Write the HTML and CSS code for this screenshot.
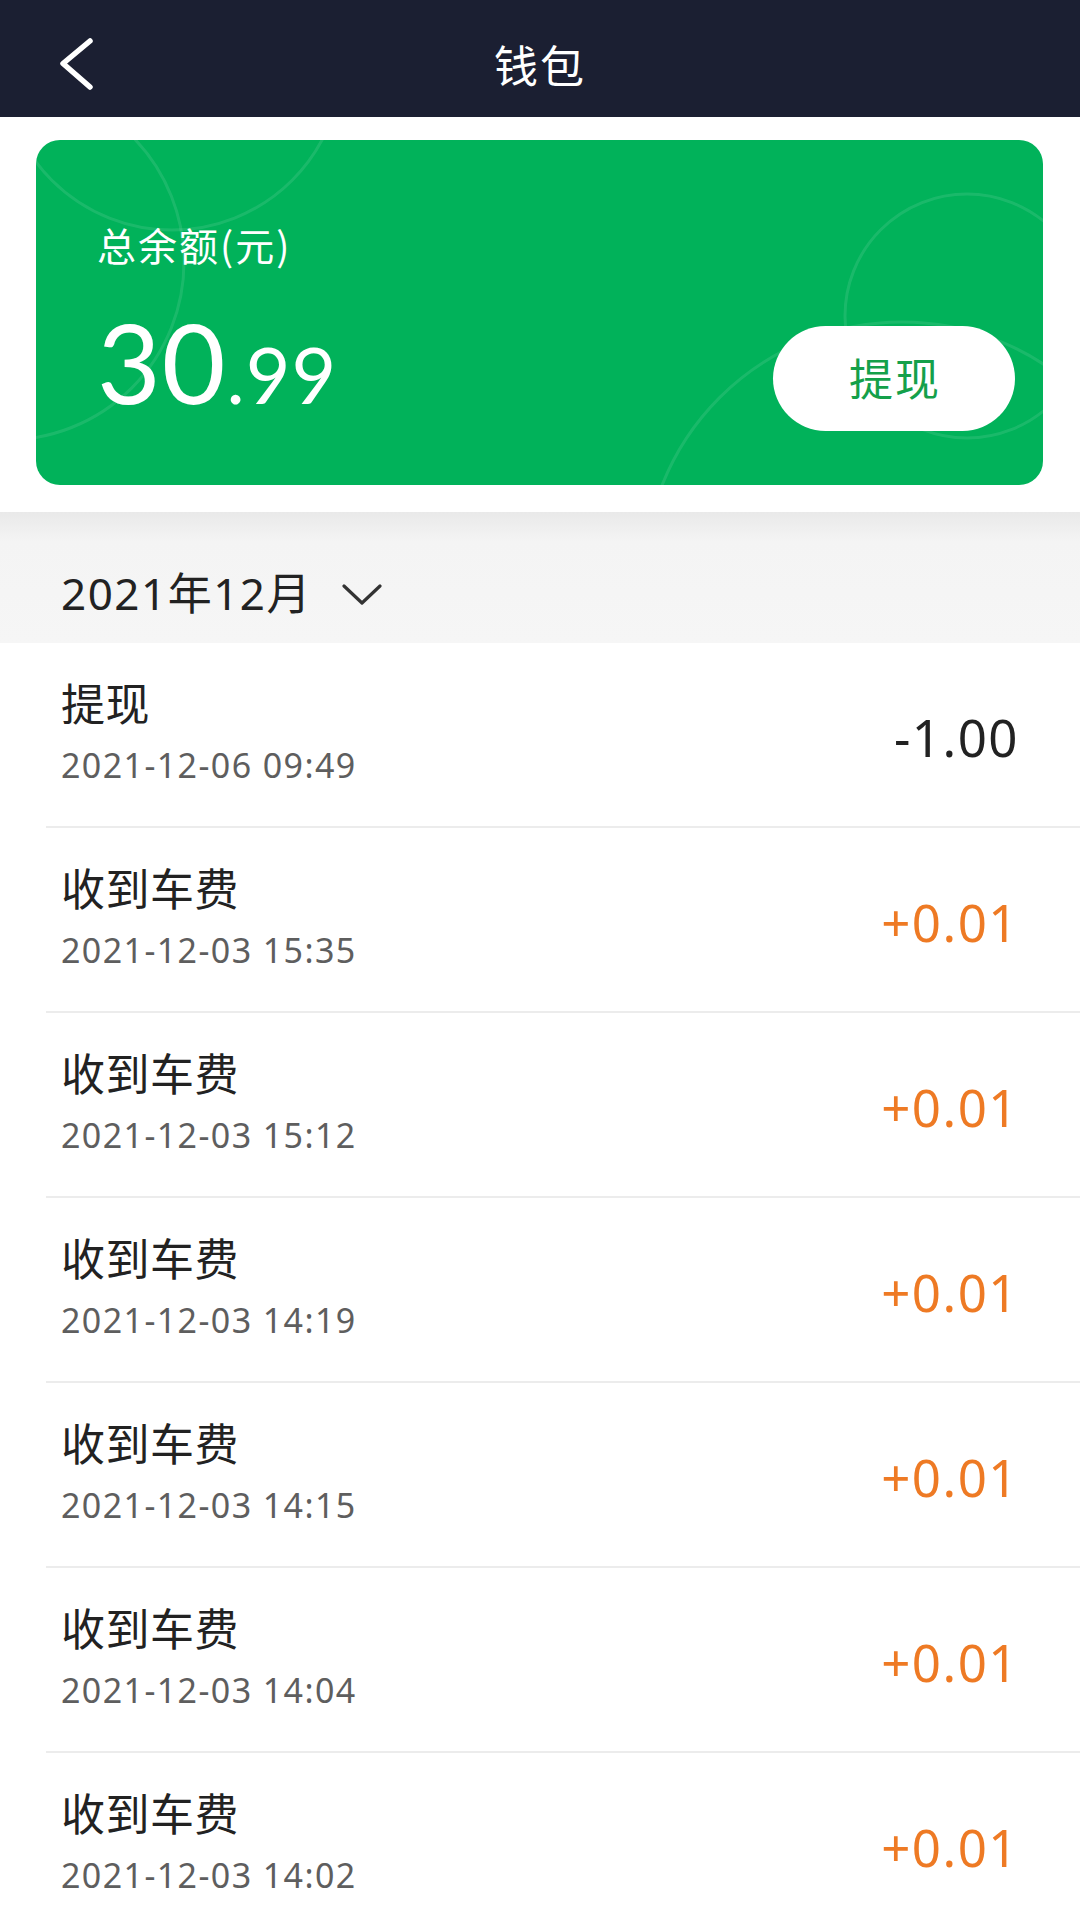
FILE: index.html
```html
<!DOCTYPE html>
<html lang="zh-CN">
<head>
<meta charset="utf-8">
<title>钱包</title>
<link rel="stylesheet" href="styles.css">
</head>
<body>
<div class="app">
  <header class="topbar">
    <div class="back">
      <svg width="44" height="60" viewBox="0 0 44 60"><polyline points="34,7 7,29.5 34,53" fill="none" stroke="#ffffff" stroke-width="5.5" stroke-linecap="round" stroke-linejoin="round"/></svg>
    </div>
    <h1 class="title">钱包</h1>
    <div></div>
  </header>

  <section class="card">
    <svg class="card-deco" width="1007" height="345" viewBox="0 0 1007 345">
      <g fill="none" stroke="rgba(255,255,255,0.1)" stroke-width="3">
        <circle cx="-30" cy="122" r="178"/>
        <circle cx="136" cy="-80" r="170"/>
        <circle cx="931" cy="176" r="122"/>
        <circle cx="866" cy="440" r="258"/>
      </g>
    </svg>
    <div class="card-label">总余额(元)</div>
    <div class="card-row">
      <div class="balance"><span class="int">30</span><span class="dec">.99</span></div>
      <button class="withdraw">提现</button>
    </div>
  </section>

  <div class="gap"></div>

  <div class="month">
    <span class="month-text">2021年12月</span>
    <svg class="month-arrow" width="40" height="24" viewBox="0 0 40 24"><polyline points="2,3 20,20 38,3" fill="none" stroke="#333" stroke-width="3.2" stroke-linecap="round" stroke-linejoin="round"/></svg>
  </div>

  <ul class="list">
    <li class="row">
      <div class="info"><div class="name">提现</div><div class="time">2021-12-06 09:49</div></div>
      <div class="amt minus">-1.00</div>
    </li>
    <li class="row">
      <div class="info"><div class="name">收到车费</div><div class="time">2021-12-03 15:35</div></div>
      <div class="amt plus">+0.01</div>
    </li>
    <li class="row">
      <div class="info"><div class="name">收到车费</div><div class="time">2021-12-03 15:12</div></div>
      <div class="amt plus">+0.01</div>
    </li>
    <li class="row">
      <div class="info"><div class="name">收到车费</div><div class="time">2021-12-03 14:19</div></div>
      <div class="amt plus">+0.01</div>
    </li>
    <li class="row">
      <div class="info"><div class="name">收到车费</div><div class="time">2021-12-03 14:15</div></div>
      <div class="amt plus">+0.01</div>
    </li>
    <li class="row">
      <div class="info"><div class="name">收到车费</div><div class="time">2021-12-03 14:04</div></div>
      <div class="amt plus">+0.01</div>
    </li>
    <li class="row">
      <div class="info"><div class="name">收到车费</div><div class="time">2021-12-03 14:02</div></div>
      <div class="amt plus">+0.01</div>
    </li>
  </ul>
</div>
</body>
</html>
```

FILE: styles.css
```css
* { box-sizing: border-box; }
html, body {
  margin: 0;
  padding: 0;
  background: #ffffff;
}
body {
  font-family: "Noto Sans", "Noto Sans CJK SC", sans-serif;
  color: #222222;
}
.app {
  width: 1080px;
  height: 1920px;
  overflow: hidden;
  background: #ffffff;
}

/* top bar */
.topbar {
  height: 117px;
  background: #1b1f32;
  display: grid;
  grid-template-columns: 1fr auto 1fr;
  align-items: center;
}
.back {
  padding-left: 56px;
  padding-top: 10px;
  display: flex;
  align-items: center;
}
.title {
  margin: 0;
  padding-top: 10px;
  font-size: 44px;
  font-weight: 400;
  line-height: 1;
  letter-spacing: 2px;
  color: #ffffff;
  font-family: "Noto Sans CJK SC", sans-serif;
}

/* balance card */
.card {
  position: relative;
  overflow: hidden;
  margin: 23px 37px 0 36px;
  height: 345px;
  border-radius: 24px;
  background: #01b25a;
  padding: 85px 28px 0 61px;
  color: #ffffff;
}
.card-deco {
  position: absolute;
  left: 0;
  top: 0;
  pointer-events: none;
}
.card-label {
  position: relative;
  font-family: "Noto Sans CJK SC", sans-serif;
  font-size: 39px;
  line-height: 1;
  letter-spacing: 2px;
}
.card-row {
  position: relative;
  display: flex;
  justify-content: space-between;
  align-items: flex-start;
  margin-top: 42px;
}
.balance {
  font-family: "Lato", sans-serif;
  line-height: 1;
  white-space: nowrap;
  letter-spacing: 1px;
}
.balance .int {
  font-size: 110px;
  font-weight: 400;
}
.balance .dec {
  font-size: 77px;
  font-weight: 400;
}
.withdraw {
  margin-top: 20px;
  width: 242px;
  height: 105px;
  border: none;
  border-radius: 53px;
  background: #ffffff;
  color: #14a04a;
  font-family: "Noto Sans CJK SC", sans-serif;
  font-size: 44px;
  letter-spacing: 2px;
  line-height: 1;
  padding: 0 0 4px 2px;
}

.gap {
  height: 27px;
}

/* month header */
.month {
  height: 131px;
  padding: 30px 0 0 61px;
  display: flex;
  align-items: center;
  gap: 30px;
  background: linear-gradient(to bottom, #e9e9e9 0px, #f4f4f4 30px, #f6f6f6 131px);
}
.month-text {
  font-size: 44px;
  line-height: 1;
  letter-spacing: 1.5px;
  color: #222222;
}
.month-arrow {
  margin-top: 4px;
}

/* list */
.list {
  list-style: none;
  margin: 0;
  padding: 0;
}
.row {
  margin-left: 46px;
  height: 185px;
  padding: 39px 61px 0 15px;
  border-bottom: 2px solid #ececec;
  display: flex;
  justify-content: space-between;
  align-items: flex-start;
}
.info {
  display: flex;
  flex-direction: column;
}
.name {
  font-size: 44px;
  line-height: 1;
  letter-spacing: 0.5px;
  color: #222222;
}
.time {
  margin-top: 22px;
  font-size: 34px;
  line-height: 1;
  color: #5e5e5e;
  letter-spacing: 1.4px;
}
.amt {
  margin-top: 30px;
  font-size: 51px;
  line-height: 1;
  letter-spacing: 1.5px;
}
.amt.minus { color: #222222; }
.amt.plus { color: #ee7a24; }
```
